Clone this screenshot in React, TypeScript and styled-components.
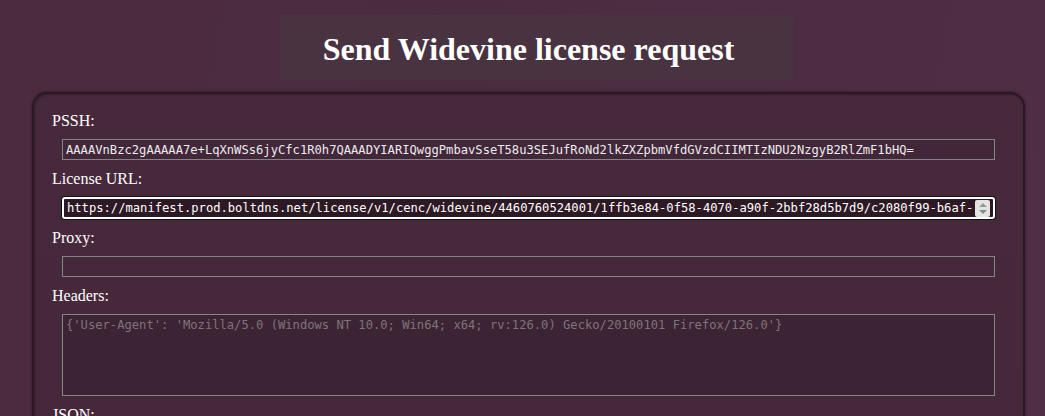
import React from "react";
import styled, { createGlobalStyle } from "styled-components";

const Global = createGlobalStyle`
  html, body {
    margin: 0;
    padding: 0;
    background: #4e2d43;
    height: 100%;
  }
  body {
    font-family: "Liberation Serif", "Times New Roman", serif;
    color: #ffffff;
    overflow: hidden;
  }
`;

const Page = styled.div`
  width: 1045px;
  height: 416px;
  overflow: hidden;
  background: linear-gradient(100deg, #4d2b3f 0%, #4a2c40 40%, #502e46 100%);
  display: flex;
  flex-direction: column;
  align-items: stretch;
`;

const TitleBar = styled.div`
  display: flex;
  justify-content: center;
  padding-top: 15px;
  height: 92px;
  flex-shrink: 0;
  box-sizing: border-box;
`;

const TitleBox = styled.div`
  width: 513px;
  height: 65px;
  margin-left: 28px;
  background: #493341;
  display: flex;
  align-items: center;
  justify-content: center;
`;

const Title = styled.h1`
  margin: 0;
  font-family: "Liberation Serif", "Times New Roman", serif;
  font-weight: bold;
  font-size: 32px;
  line-height: 36px;
  color: #ffffff;
  padding-top: 2px;
  margin-left: -16px;
`;

const Panel = styled.div`
  margin-left: 32px;
  width: 993px;
  box-sizing: border-box;
  flex: 1 0 auto;
  background: linear-gradient(180deg, #47293c 0%, #45283a 100%);
  border: 2px solid #2c1824;
  border-bottom: none;
  border-radius: 15px 15px 0 0;
  box-shadow: 0 0 3px rgba(20, 8, 15, 0.6), inset 1px 1px 2px rgba(0, 0, 0, 0.25);
  padding: 18px 28px 0 18px;
  display: flex;
  flex-direction: column;
`;

const Label = styled.div`
  font-size: 16px;
  line-height: 18px;
  height: 18px;
  color: #ffffff;
  margin-bottom: 9px;
  flex-shrink: 0;
`;

const Field = styled.div<{ $h?: number; $focused?: boolean; $bg?: string }>`
  margin-left: 10px;
  height: ${(p) => p.$h ?? 21}px;
  flex-shrink: 0;
  box-sizing: border-box;
  border: ${(p) => (p.$focused ? "2px solid #ffffff" : "1px solid #858585")};
  border-radius: ${(p) => (p.$focused ? "3px" : "0")};
  box-shadow: ${(p) => (p.$focused ? "0 0 0 1px #111" : "none")};
  background: ${(p) => p.$bg ?? "#42273a"};
  padding: ${(p) => (p.$focused ? "1px 3px" : "2px 3px")};
  margin-bottom: 10px;
  display: flex;
  align-items: flex-start;
  overflow: hidden;
`;

const Mono = styled.div<{ $color?: string }>`
  font-family: "DejaVu Sans Mono", "Liberation Mono", monospace;
  font-size: 12.15px;
  line-height: 16px;
  color: ${(p) => p.$color ?? "#ececec"};
  white-space: nowrap;
  overflow: hidden;
  flex: 1;
`;

const Scroll = styled.div`
  width: 15px;
  height: 17px;
  background: #e4e4e4;
  border-radius: 2px;
  display: flex;
  flex-direction: column;
  align-items: center;
  justify-content: space-between;
  padding: 3px 0;
  box-sizing: border-box;
  flex-shrink: 0;
  margin-left: 2px;
`;

const Tri = styled.div<{ $down?: boolean }>`
  width: 0;
  height: 0;
  border-left: 4px solid transparent;
  border-right: 4px solid transparent;
  ${(p) =>
    p.$down
      ? "border-top: 4px solid #8a8a8a;"
      : "border-bottom: 4px solid #9a9a9a;"}
`;

export default function App() {
  return (
    <>
      <Global />
      <Page>
        <TitleBar>
          <TitleBox>
            <Title>Send Widevine license request</Title>
          </TitleBox>
        </TitleBar>
        <Panel>
          <Label>PSSH:</Label>
          <Field>
            <Mono>
              AAAAVnBzc2gAAAAA7e+LqXnWSs6jyCfc1R0h7QAAADYIARIQwggPmbavSseT58u3SEJufRoNd2lkZXZpbmVfdGVzdCIIMTIzNDU2NzgyB2RlZmF1bHQ=
            </Mono>
          </Field>
          <Label>License URL:</Label>
          <Field $focused $h={22} $bg="#2d1924">
            <Mono $color="#ffffff">
              https://manifest.prod.boltdns.net/license/v1/cenc/widevine/4460760524001/1ffb3e84-0f58-4070-a90f-2bbf28d5b7d9/c2080f99-b6af-
            </Mono>
            <Scroll>
              <Tri />
              <Tri $down />
            </Scroll>
          </Field>
          <Label>Proxy:</Label>
          <Field $bg="#45283a">
            <Mono> </Mono>
          </Field>
          <Label>Headers:</Label>
          <Field $h={82} $bg="#3d2434">
            <Mono $color="#7e7479">
              {"{'User-Agent': 'Mozilla/5.0 (Windows NT 10.0; Win64; x64; rv:126.0) Gecko/20100101 Firefox/126.0'}"}
            </Mono>
          </Field>
          <Label>JSON:</Label>
        </Panel>
      </Page>
    </>
  );
}
